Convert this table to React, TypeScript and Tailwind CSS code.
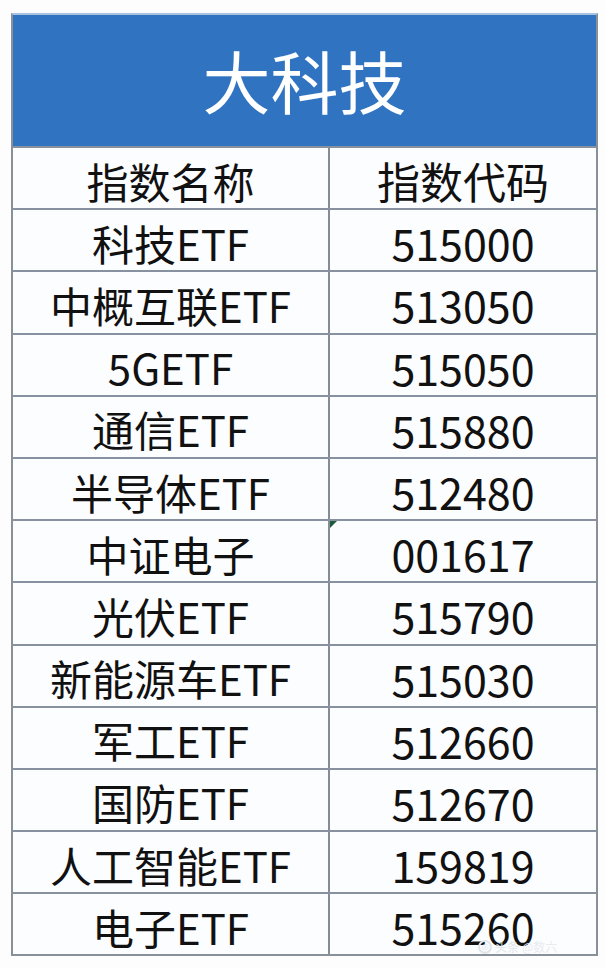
import React from 'react';

const ROWS: { name: string; code: string; flag?: boolean }[] = [
  { name: '科技ETF', code: '515000' },
  { name: '中概互联ETF', code: '513050' },
  { name: '5GETF', code: '515050' },
  { name: '通信ETF', code: '515880' },
  { name: '半导体ETF', code: '512480' },
  { name: '中证电子', code: '001617', flag: true },
  { name: '光伏ETF', code: '515790' },
  { name: '新能源车ETF', code: '515030' },
  { name: '军工ETF', code: '512660' },
  { name: '国防ETF', code: '512670' },
  { name: '人工智能ETF', code: '159819' },
  { name: '电子ETF', code: '515260' },
];

const font = { fontFamily: '"Noto Sans CJK SC", "Noto Sans", sans-serif' };

function Row({ name, code, flag }: { name: string; code: string; flag?: boolean }) {
  return (
    <div className="flex h-[62.2px] border-t-2 border-[#8791a0]">
      <div className="w-[315px] flex items-center justify-center pt-[5px] text-[42px] leading-none text-[#111]">
        {name}
      </div>
      <div className="relative flex-1 flex items-center justify-center border-l-2 border-[#868c95] pt-[5px] text-[43px] leading-none text-[#111]">
        {flag && (
          <svg className="absolute left-0 top-0" width="7" height="7" viewBox="0 0 7 7">
            <path d="M0 0 H7 L0 7 Z" fill="#1e5b3c" />
          </svg>
        )}
        {code}
      </div>
    </div>
  );
}

export default function App() {
  return (
    <div className="relative w-[606px] h-[968px] bg-[#fdfdfe] pl-[11px] pt-[13px]" style={font}>
      <div className="w-[587px] border-2 border-[#8a9099] border-t-[#a9c2e0] bg-[#fcfdff]">
        <div className="h-[131px] bg-[#2f73c1] flex items-center justify-center text-white text-[68px] leading-none pb-[2px]">
          大科技
        </div>
        <Row name="指数名称" code="指数代码" />
        {ROWS.map(r => (
          <Row key={r.code} {...r} />
        ))}
      </div>
      {/* 水印 */}
      <div className="absolute left-[478px] top-[940px] flex items-center gap-[3px] text-[12px] leading-none text-[#e1e5ea]">
        <span className="w-[14px] h-[14px] rounded-full border-2 border-[#e1e5ea] flex items-center justify-center text-[8px]">@</span>
        <span>头条</span>
        <span className="text-[#e8ebef]">@数六</span>
      </div>
    </div>
  );
}
